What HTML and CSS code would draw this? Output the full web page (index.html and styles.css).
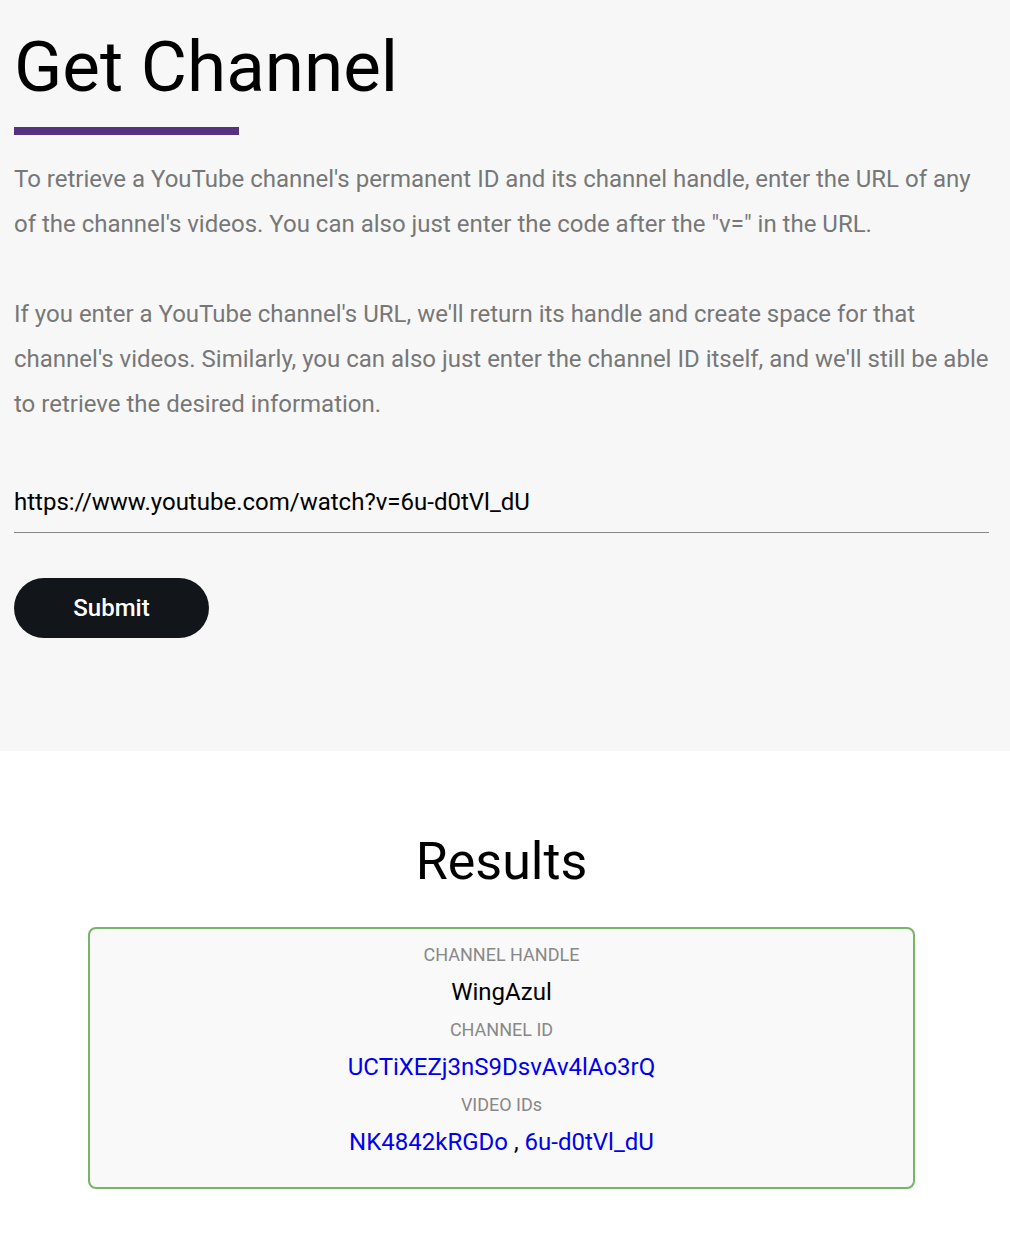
FILE: index.html
```html
<!DOCTYPE html>
<html lang="en">
<head>
    <meta charset="UTF-8">
    <meta name="viewport" content="width=device-width, initial-scale=1.0">
    <title>Get Channel</title>
    <link rel="stylesheet" href="styles.css">
</head>
<body>

    <div class="form-section">
        <div class="container">
            <h1>Get Channel</h1>
            <div class="title-bar"></div>

            <p class="intro">To retrieve a YouTube channel's permanent ID and its channel handle, enter the URL of any of the channel's videos. You can also just enter the code after the "v=" in the URL.</p>
            <p class="intro">If you enter a YouTube channel's URL, we'll return its handle and create space for that channel's videos. Similarly, you can also just enter the channel ID itself, and we'll still be able to retrieve the desired information.</p>

            <form id="channelForm">
                <input type="text" id="videoUrl" value="https://www.youtube.com/watch?v=6u-d0tVl_dU">
                <button type="submit" class="submit-btn">Submit</button>
            </form>
        </div>
    </div>

    <div class="container results">
        <h2>Results</h2>

        <div class="result-card">
            <div class="result-label">CHANNEL HANDLE</div>
            <div class="result-value">WingAzul</div>

            <div class="result-label">CHANNEL ID</div>
            <div class="result-value"><a href="#">UCTiXEZj3nS9DsvAv4lAo3rQ</a></div>

            <div class="result-label">VIDEO IDs</div>
            <div class="result-value"><a href="#">NK4842kRGDo</a> , <a href="#">6u-d0tVl_dU</a></div>
        </div>
    </div>

</body>
</html>
```

FILE: styles.css
```css
body {
    font-family: Roboto, "Liberation Sans", sans-serif;
    background-color: #ffffff;
    margin: 0;
    padding: 0;
}

.container {
    width: 975px;
    padding: 0 14px;
}

.form-section {
    background-color: #f7f7f7;
    padding-top: 22px;
    padding-bottom: 113px;
}

h1 {
    font-size: 71px;
    font-weight: 400;
    color: #000;
    margin: 0;
    line-height: 90px;
}

.title-bar {
    width: 225px;
    height: 8px;
    background-color: #563280;
    margin-top: 15px;
    margin-bottom: 22px;
}

.intro {
    font-size: 24px;
    line-height: 45px;
    color: #777;
    margin: 0 0 45px 0;
}

input[type="text"] {
    display: block;
    width: 100%;
    box-sizing: border-box;
    font-family: inherit;
    font-size: 24px;
    color: #000;
    background: transparent;
    border: none;
    border-bottom: 1px solid #888;
    padding: 16px 0 16px 0;
    margin: 0;
    outline: none;
}

.submit-btn {
    margin-top: 45px;
    width: 195px;
    height: 60px;
    border: none;
    border-radius: 30px;
    background-color: #121519;
    color: #fff;
    font-family: inherit;
    font-size: 24px;
    font-weight: 500;
    cursor: pointer;
}

.results {
    text-align: center;
    padding-top: 78px;
}

h2 {
    font-size: 52px;
    font-weight: 400;
    color: #000;
    margin: 0 0 32px 0;
    line-height: 66px;
}

.result-card {
    width: 827px;
    box-sizing: border-box;
    margin: 0 auto;
    background-color: #f9f9f9;
    border: 2px solid #77b466;
    border-radius: 8px;
    padding: 13px 0 20px 0;
}

.result-label {
    font-size: 18px;
    color: #888;
    line-height: 26px;
}

.result-value {
    font-size: 24px;
    color: #000;
    line-height: 49px;
}

.result-value a {
    color: #0000ee;
    text-decoration: none;
}
```
